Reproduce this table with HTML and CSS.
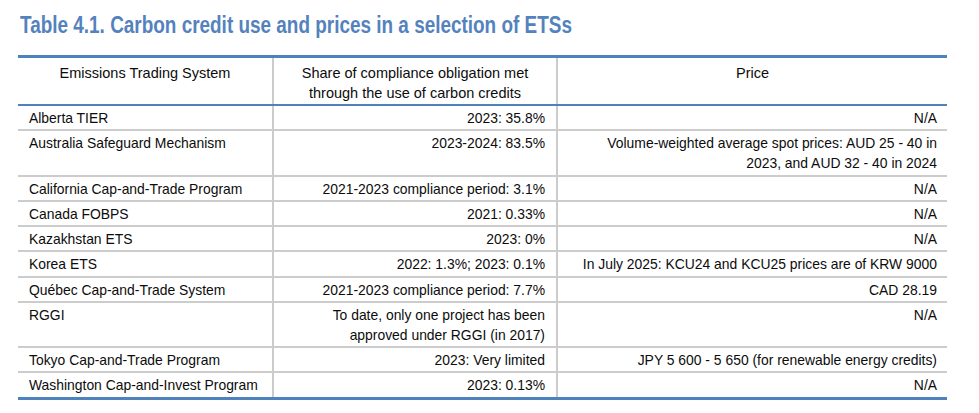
FILE: index.html
```html
<!DOCTYPE html>
<html lang="en">
<head>
<meta charset="utf-8">
<title>Table 4.1</title>
<link rel="stylesheet" href="styles.css">
</head>
<body>
<div class="page">
  <h1 class="title">Table 4.1. Carbon credit use and prices in a selection of ETSs</h1>
  <table class="ets">
    <colgroup>
      <col class="c1">
      <col class="c2">
      <col class="c3">
    </colgroup>
    <thead>
      <tr>
        <th>Emissions Trading System</th>
        <th>Share of compliance obligation met<br>through the use of carbon credits</th>
        <th>Price</th>
      </tr>
    </thead>
    <tbody>
      <tr><td>Alberta TIER</td><td>2023: 35.8%</td><td>N/A</td></tr>
      <tr><td>Australia Safeguard Mechanism</td><td>2023-2024: 83.5%</td><td>Volume-weighted average spot prices: AUD 25 - 40 in<br>2023, and AUD 32 - 40 in 2024</td></tr>
      <tr><td>California Cap-and-Trade Program</td><td>2021-2023 compliance period: 3.1%</td><td>N/A</td></tr>
      <tr><td>Canada FOBPS</td><td>2021: 0.33%</td><td>N/A</td></tr>
      <tr><td>Kazakhstan ETS</td><td>2023: 0%</td><td>N/A</td></tr>
      <tr><td>Korea ETS</td><td>2022: 1.3%; 2023: 0.1%</td><td>In July 2025: KCU24 and KCU25 prices are of KRW 9000</td></tr>
      <tr><td>Québec Cap-and-Trade System</td><td>2021-2023 compliance period: 7.7%</td><td>CAD 28.19</td></tr>
      <tr><td>RGGI</td><td>To date, only one project has been<br>approved under RGGI (in 2017)</td><td>N/A</td></tr>
      <tr><td>Tokyo Cap-and-Trade Program</td><td>2023: Very limited</td><td>JPY 5 600 - 5 650 (for renewable energy credits)</td></tr>
      <tr><td>Washington Cap-and-Invest Program</td><td>2023: 0.13%</td><td>N/A</td></tr>
    </tbody>
  </table>
</div>
</body>
</html>
```

FILE: styles.css
```css
html, body {
  margin: 0;
  padding: 0;
  background: #ffffff;
}

.page {
  padding: 12px 0 0 18px;
  width: 929px;
}

.title {
  margin: 0 0 17px 2px;
  font-family: "Liberation Sans", Arial, sans-serif;
  font-weight: bold;
  font-size: 23px;
  line-height: 26px;
  color: #5482bd;
  white-space: nowrap;
  transform: scaleX(0.823);
  transform-origin: left center;
}

.ets {
  width: 929px;
  table-layout: fixed;
  border-collapse: collapse;
  font-family: "Liberation Sans", Arial, sans-serif;
  color: #0c0c0c;
  border-top: 3px solid #4f81bd;
  border-bottom: 3px solid #4f81bd;
}

.c1 { width: 255px; }
.c2 { width: 284px; }
.c3 { width: 390px; }

.ets th {
  font-weight: normal;
  font-size: 14.5px;
  line-height: 20px;
  text-align: center;
  vertical-align: top;
  padding: 5px 8px 1px;
  border-bottom: 2px solid #4f81bd;
}

.ets td {
  font-size: 13.9px;
  line-height: 20px;
  vertical-align: top;
  padding: 2px 11px 1.25px;
  border-top: 2px solid #cccccc;
  text-align: right;
}

.ets tbody tr:first-child td {
  border-top: none;
}

.ets td:first-child {
  text-align: left;
}

.ets th + th,
.ets td + td {
  border-left: 2px solid #cccccc;
}

.ets td:last-child {
  padding-right: 10px;
}
```
